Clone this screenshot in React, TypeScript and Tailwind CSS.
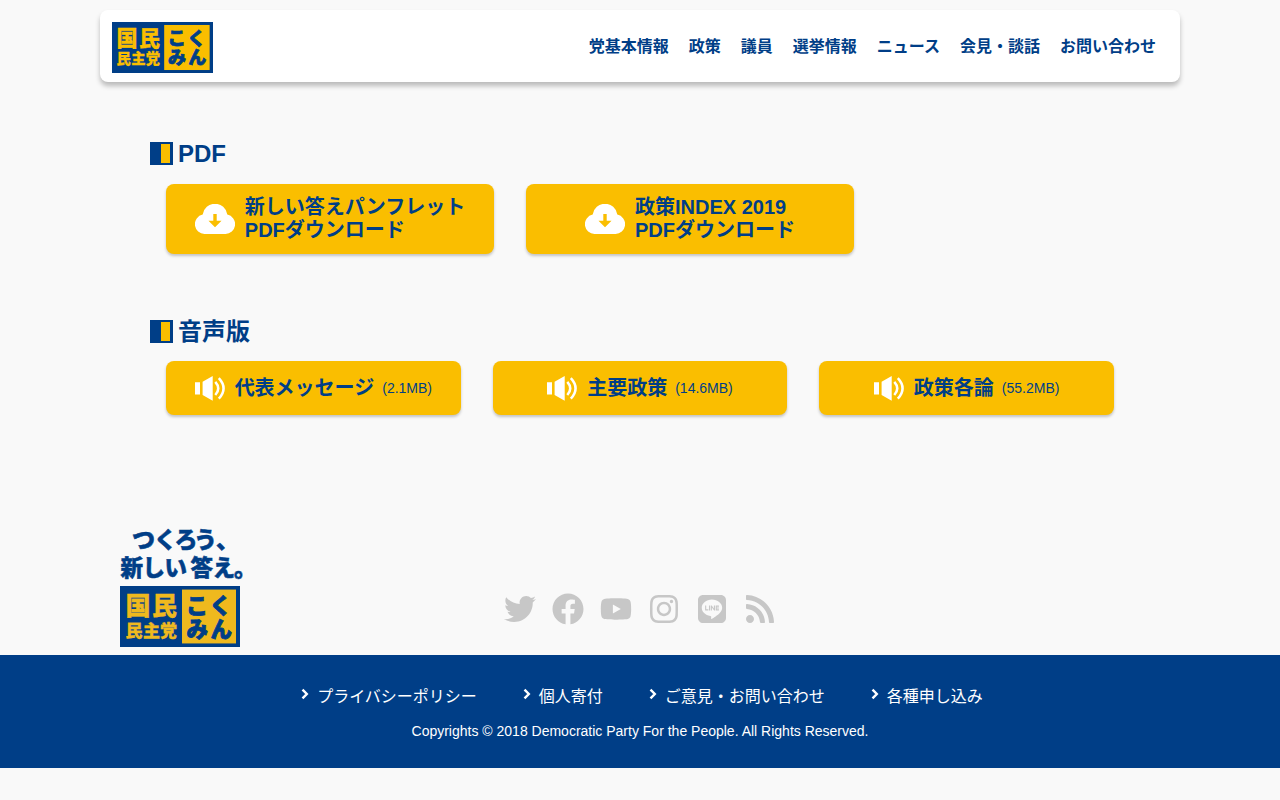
import { FaFacebook, FaInstagram, FaLine, FaRss, FaTwitter, FaYoutube } from "react-icons/fa";

const navItems = ["党基本情報", "政策", "議員", "選挙情報", "ニュース", "会見・談話", "お問い合わせ"];

const pdfs = [
    { id: 1, title: "新しい答えパンフレット" },
    { id: 2, title: "政策INDEX 2019" },
];

const audios = [
    { title: "代表メッセージ", size: "(2.1MB)" },
    { title: "主要政策", size: "(14.6MB)" },
    { title: "政策各論", size: "(55.2MB)" },
];

const footerLinks = ["プライバシーポリシー", "個人寄付", "ご意見・お問い合わせ", "各種申し込み"];

type LogoProps = { className:string, yellow:string }

function Logo({ className, yellow }:LogoProps) {
    return (
        <svg viewBox="0 0 120 60" preserveAspectRatio="none" className={className} fontFamily="'Noto Sans CJK JP', sans-serif" fontWeight="900">
            <rect width="120" height="60" fill="#003e87" />
            <rect x="62" y="3.5" width="54" height="53" fill={yellow} />
            <g fill={yellow} stroke={yellow} strokeWidth="0.3">
                <text x="5.5 32" y="28.8" fontSize="25">国民</text>
                <text x="5.5 23 40" y="50" fontSize="17">民主党</text>
            </g>
            <g fill="#003e87" stroke="#003e87" strokeWidth="0.8">
                <text x="66 89.5" y="27.5" fontSize="22">こく</text>
                <text x="66.5 90.5" y="50" fontSize="21.5">みん</text>
            </g>
        </svg>
    )
}

function CloudIcon() {
    return (
        <svg viewBox="0 0 40 30" className="h-[30px] w-10 shrink-0">
            <path d="M9.8 30A9.8 9.8 0 0 1 7.7 10.6A12.4 12.4 0 0 1 32.3 10.6A9.8 9.8 0 0 1 30.2 30Z" fill="#fff" />
            <path d="M18.3 10h3.4v6.7h4.8L20 23.2L13.5 16.7h4.8Z" fill="#fabe00" />
        </svg>
    )
}

function SpeakerIcon() {
    return (
        <svg viewBox="0 0 30 25" className="h-[25px] w-[30px] shrink-0">
            <path d="M0 6.3h5v12.2H0ZM7.6 5.8L17.7 0v24.7L7.6 19Z" fill="#fff" />
            <path d="M20.3 5.8Q26.2 12.4 20.3 19M23.8 2.2Q33.3 12.4 23.8 22.6" fill="none" stroke="#fff" strokeWidth="2.5" />
        </svg>
    )
}

function SectionTitle({ text }:{ text:string }) {
    return (
        <h2 className="flex h-9 items-center gap-[5px] text-2xl font-bold">
            <span className="mb-px flex size-[23px] justify-end bg-[#003e87] py-[2px] pr-[3px]">
                <span className="w-[9px] bg-[#fabe00]"></span>
            </span>
            {text}
        </h2>
    )
}

export default function App() {
    return (
        <div className="min-h-screen bg-[#f9f9f9] pt-2.5 font-['Liberation_Sans','Noto_Sans_CJK_JP',sans-serif] text-[#003e87]">
            <header className="mx-auto flex h-[72px] w-[1080px] items-center justify-between rounded-lg bg-white pr-6 pl-3 shadow-[0_4px_5px_rgba(0,0,0,0.25)]">
                <Logo className="mt-0.5 h-[51px] w-[101px]" yellow="#fabe00" />
                <nav className="flex gap-5 pt-px text-base leading-6 font-bold">
                    {navItems.map(item => <a href="#" key={item}>{item}</a>)}
                </nav>
            </header>

            <main className="mx-auto w-[980px] pt-[54px]">
                <section>
                    <SectionTitle text="PDF" />
                    <div className="mt-3 flex gap-8 px-4">
                        {pdfs.map(item => (
                            <a href="#" key={item.id} className="flex h-[70px] w-[328px] items-center justify-center gap-2.5 rounded-lg bg-[#fabe00] text-xl leading-[23px] font-bold shadow-[0_2px_3px_rgba(0,0,0,0.22)]">
                                <CloudIcon />
                                <span>{item.title}<br />PDFダウンロード</span>
                            </a>
                        ))}
                    </div>
                </section>
                <section className="mt-[60px]">
                    <SectionTitle text="音声版" />
                    <div className="mt-[11px] grid grid-cols-3 gap-8 px-4">
                        {audios.map(item => (
                            <a href="#" key={item.title} className="flex h-[54px] items-center justify-center rounded-lg bg-[#fabe00] text-xl font-bold shadow-[0_2px_3px_rgba(0,0,0,0.22)]">
                                <SpeakerIcon />
                                <span className="ml-2.5">{item.title}</span>
                                <span className="ml-2 text-sm font-normal">{item.size}</span>
                            </a>
                        ))}
                    </div>
                </section>
            </main>

            <footer className="mt-[110px]">
                <div className="mx-auto grid h-[130px] w-[1040px] grid-cols-[1fr_auto_1fr]">
                    <div className="flex flex-col">
                        <svg viewBox="0 0 140 58" className="h-[58px] w-[140px] overflow-visible" fontFamily="'Noto Sans CJK JP', sans-serif" fontWeight="900" fill="#003e87" stroke="#003e87" strokeWidth="0.5">
                            <text x="12 34 54.5 74 96" y="23" fontSize="23">つくろう、</text>
                            <text x="0.5 22.5 44.5 70.5 92.5 114" y="51.3" fontSize="22.5">新しい答え。</text>
                        </svg>
                        <Logo className="mt-[3px] h-[61px] w-[120px]" yellow="#efb91e" />
                    </div>
                    <div className="mt-[68px] flex h-8 gap-4 self-start text-[32px] text-[#c7c7c7]">
                        <FaTwitter />
                        <FaFacebook />
                        <FaYoutube className="size-8" />
                        <FaInstagram />
                        <FaLine />
                        <FaRss />
                    </div>
                </div>
                <div className="h-[113px] bg-[#003e87] pt-[30px] text-center text-white">
                    <ul className="flex justify-center gap-[46px] pl-1">
                        {footerLinks.map(item => (
                            <li key={item} className="flex gap-2 leading-6">
                                <svg viewBox="0 0 8 12" className="mt-[3px] h-3 w-2" fill="none" stroke="currentColor" strokeWidth="2.4">
                                    <path d="M1.5 1.7L5.8 6L1.5 10.3" />
                                </svg>
                                <a href="#">{item}</a>
                            </li>
                        ))}
                    </ul>
                    <p className="mt-[11px] text-sm leading-[22px]">Copyrights © 2018 Democratic Party For the People. All Rights Reserved.</p>
                </div>
            </footer>
        </div>
    )
}
